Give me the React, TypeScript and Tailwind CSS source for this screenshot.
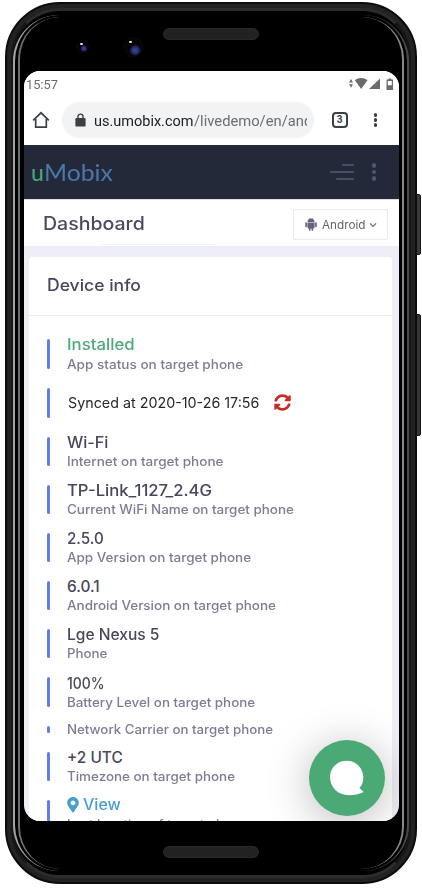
import { useLayoutEffect, useRef, useState, type ReactNode } from "react";
import { FaMapMarkerAlt, FaSyncAlt } from "react-icons/fa";

type FitProps = { text: string; width: number; className?: string };

/** Single line label whose glyphs are stretched to fill the given width. */
function Fit({ text, width, className = "" }: FitProps) {
  const ref = useRef<HTMLSpanElement>(null);
  const [scale, setScale] = useState(1);
  useLayoutEffect(() => {
    if (ref.current) setScale(width / ref.current.offsetWidth);
  }, [text, width]);
  return (
    <span className={`block shrink-0 whitespace-nowrap ${className}`} style={{ width }}>
      <span ref={ref} className="inline-block origin-left align-top" style={{ transform: `scaleX(${scale})` }}>
        {text}
      </span>
    </span>
  );
}

function Row({ children, className = "h-[29.2px]" }: { children: ReactNode; className?: string }) {
  return (
    <div className={`flex shrink-0 ${className}`}>
      <div className="mr-[17.5px] w-[2.5px] shrink-0 rounded-full bg-[#5f7fe8]" />
      <div className="flex flex-col items-start justify-center">{children}</div>
    </div>
  );
}

const VALUE = "text-[15.4px] leading-[20px] pt-px -mb-px font-[480] text-[#48465b]";
const LABEL = "text-[12.8px] leading-[19px] font-[450] text-[#7d7c97]";

const rows = [
  { value: "Wi-Fi", vw: 41, label: "Internet on target phone", lw: 156.5 },
  { value: "TP-Link_1127_2.4G", vw: 145, label: "Current WiFi Name on target phone", lw: 226.5 },
  { value: "2.5.0", vw: 36.5, label: "App Version on target phone", lw: 184 },
  { value: "6.0.1", vw: 33, label: "Android Version on target phone", lw: 208.5 },
  { value: "Lge Nexus 5", vw: 92, label: "Phone", lw: 40.5 },
  { value: "100%", vw: 38, label: "Battery Level on target phone", lw: 188 },
];

function StatusBar() {
  return (
    <div className="flex h-[26px] items-center justify-between pr-[4px] pl-[2px] text-[#6b6b6b]">
      <Fit text="15:57" width={32} className="pt-px font-[Roboto,sans-serif] text-[13.2px] leading-[16px]" />
      <svg width="46" height="14" viewBox="0 0 46 14" fill="currentColor" className="-mt-px">
        <path d="M0 5.4 2 2l2 3.4ZM0 7.3h4L2 10.8Z" />
        <path d="M5.800 3.200c3.700-2.900 9-2.900 12.700 0L12.200 12Z" />
        <path d="M20 12 31 1.400V12Z" />
        <path fillRule="evenodd" d="M39.400 1.400h3v1.200h1.600V13h-6.500V2.600h1.900Zm-.6 2.700v4.100h4V4.100Z" />
      </svg>
    </div>
  );
}

function AddressBar() {
  return (
    <div className="flex h-[46px] items-center pl-[8px] text-[#3c4043]">
      <svg width="18" height="18" viewBox="0 0 18 18" fill="none" stroke="currentColor" strokeWidth="1.7">
        <path d="M1.2 9.4 9 1.8l7.8 7.6M3.7 8v8.2h10.6V8" />
      </svg>
      <div className="ml-[12px] flex h-[36px] w-[252px] items-center rounded-full bg-[#f1f3f4]">
        <svg width="11" height="14" viewBox="0 0 11 14" className="ml-[12.5px]">
          <path d="M3 6V3.6a2.5 2.5 0 0 1 5 0V6" fill="none" stroke="#3c4043" strokeWidth="1.4" />
          <rect x="0.4" y="5" width="10.2" height="8.6" rx="1.2" fill="#3c4043" />
        </svg>
        <div className="ml-[8.5px] flex w-[213px] overflow-hidden pt-px font-[Roboto,sans-serif] text-[15px] leading-[20px]">
          <Fit text="us.umobix.com" width={99.5} className="text-[#202124]" />
          <Fit text="/livedemo/en/and" width={118} className="text-[#6b6e72]" />
        </div>
      </div>
      <div className="ml-[17.5px] flex h-[16px] w-[16px] items-center justify-center rounded-[4px] border-2 border-[#3c4043] font-[Roboto,sans-serif] text-[10px] leading-none font-bold">
        3
      </div>
      <div className="ml-[26px] flex flex-col gap-[1.6px]">
        <i className="size-[3.7px] rounded-full bg-[#3c4043]" />
        <i className="size-[3.7px] rounded-full bg-[#3c4043]" />
        <i className="size-[3.7px] rounded-full bg-[#3c4043]" />
      </div>
    </div>
  );
}

function SiteHeader() {
  return (
    <div className="flex h-[54px] shrink-0 items-center bg-[#242939]">
      <div className="ml-[7px] flex w-[299px] font-[Lato,sans-serif] text-[23px] leading-[24px]">
        <Fit text="u" width={13} className="text-[#4bab74]" />
        <Fit text="Mobix" width={69} className="text-[#4a78a8]" />
      </div>
      <div className="flex w-[24px] flex-col items-end gap-[5px]">
        <i className="h-[2px] w-[12px] rounded-full bg-[#484e66]" />
        <i className="h-[2px] w-[24px] rounded-full bg-[#484e66]" />
        <i className="h-[2px] w-[18px] rounded-full bg-[#484e66]" />
      </div>
      <div className="ml-[18px] flex flex-col gap-[2px]">
        <i className="size-[4.4px] rounded-full bg-[#50566f]" />
        <i className="size-[4.4px] rounded-full bg-[#50566f]" />
        <i className="size-[4.4px] rounded-full bg-[#50566f]" />
      </div>
    </div>
  );
}

function AndroidIcon() {
  return (
    <svg width="12" height="13" viewBox="0 0 12 13" fill="currentColor">
      <path d="M2.500 4C2.500 2.400 3.300 1.500 4.300 1L3.700.2l.4-.2.6.8c.8-.3 1.800-.3 2.600 0l.6-.8.4.2L7.700 1c1 .5 1.800 1.400 1.800 3Z" />
      <rect x="0.200" y="4.200" width="1.700" height="5" rx=".85" />
      <rect x="10.100" y="4.200" width="1.700" height="5" rx=".85" />
      <path d="M2.400 4.400h7.200v5.200c0 .5-.4.800-.8.800h-.7v1.700c0 1.100-1.600 1.100-1.600 0v-1.700h-1v1.700c0 1.100-1.600 1.100-1.600 0v-1.700h-.7c-.4 0-.8-.3-.8-.8Z" />
    </svg>
  );
}

function Dashboard() {
  return (
    <div className="flex h-[46px] shrink-0 flex-col bg-white">
      <div className="flex h-[44px] items-center justify-between pt-[5px] pr-[11px] pl-[19px]">
        <Fit text="Dashboard" width={102} className="-mt-px text-[18px] leading-[24px] font-[480] text-[#4d4a5f]" />
        <div className="flex h-[31px] w-[95px] items-center rounded-[2px] border border-[#e8eaf2] pl-[11px] text-[#65637c]">
          <AndroidIcon />
          <Fit text="Android" width={43} className="ml-[5px] text-[11.2px] leading-[16px]" />
          <svg width="8" height="6" viewBox="0 0 8 6" fill="none" stroke="currentColor" strokeWidth="1.2" className="ml-[3.5px]">
            <path d="m1 1.3 3 3 3-3" />
          </svg>
        </div>
      </div>
      <div className="ml-[76px] h-[1px] w-[116px] bg-[#f2f8f2]" />
    </div>
  );
}

function DeviceCard() {
  return (
    <div className="mt-[11px] ml-[5px] h-[600px] w-[363px] shrink-0 rounded-t-[4px] bg-white">
      <div className="flex h-[59px] items-center border-b-[1.5px] border-[#eceef4] pl-[18px]">
        <Fit text="Device info" width={94} className="-mt-[2px] text-[16.6px] leading-[24px] font-[480] text-[#48465b]" />
      </div>
      <div className="flex flex-col gap-[19px] pt-[23px] pl-[18px]">
        <Row className="h-[30px]">
          <Fit text="Installed" width={67.5} className="text-[15.4px] leading-[20px] font-[480] text-[#4dab76]" />
          <Fit text="App status on target phone" width={176} className={LABEL} />
        </Row>
        <Row className="-mt-[0.5px] h-[30px]">
          <div className="flex items-center pl-px">
            <Fit text="Synced at 2020-10-26 17:56" width={191.5} className="text-[14.2px] leading-[20px] text-[#26262c]" />
            <FaSyncAlt className="ml-[14px] size-[17px] text-[#c72d20]" />
          </div>
        </Row>
        {rows.map((r) => (
          <Row key={r.label}>
            <Fit text={r.value} width={r.vw} className={VALUE} />
            <Fit text={r.label} width={r.lw} className={LABEL} />
          </Row>
        ))}
        <Row className="h-[7px]">
          <Fit text="Network Carrier on target phone" width={206.5} className={LABEL} />
        </Row>
        <Row>
          <Fit text="+2 UTC" width={56} className={VALUE} />
          <Fit text="Timezone on target phone" width={168.5} className={LABEL} />
        </Row>
        <Row>
          <div className="flex items-center text-[#459fcf]">
            <FaMapMarkerAlt className="h-[15.5px] w-[12px]" />
            <Fit text="View" width={37.5} className="ml-[4px] pt-px text-[15.4px] leading-[20px] font-[480]" />
          </div>
          <Fit text="Last location of target phone" width={180} className={LABEL} />
        </Row>
      </div>
    </div>
  );
}

function Grille({ className }: { className: string }) {
  return <div className={`mx-auto h-[12px] w-[96px] rounded-full border border-[#292929] bg-[#222222] ${className}`} />;
}

function Lens({ className }: { className: string }) {
  return (
    <div className={`absolute rounded-full border border-[#0b0b0f] bg-[radial-gradient(circle_at_62%_68%,#34469a_0%,#26367c_18%,#050508_36%)] ${className}`}>
      <i className="absolute top-[16%] left-[28%] size-[2.5px] rounded-full bg-[#e5e5e5] blur-[0.5px]" />
    </div>
  );
}

export default function App() {
  return (
    <div className="relative h-[888px] w-[422px] overflow-hidden bg-white font-[Inter,'Open_Sans',sans-serif]">
      <div className="absolute top-[194px] left-[414px] h-[61px] w-[7px] rounded-[2px] border border-[#1a1a1a] bg-[#3a3a3a]" />
      <div className="absolute top-[314px] left-[414px] h-[122px] w-[7px] rounded-[2px] border border-[#1a1a1a] bg-[#343434]" />
      <div className="relative mt-[2px] ml-[5px] inline-block h-[882px] w-[412px] rounded-[55px] border-[2px] border-[#0c0c0c] bg-[#222222] p-[4px]">
        <div className="h-full rounded-[49px] border-[3px] border-x-[#161616] border-y-[#2c2c2c] bg-[#161616]">
          <div className="h-full rounded-[46px] bg-black">
            <div className="pointer-events-none absolute inset-x-[6px] inset-y-[11px] rounded-[46px] border-r-[2px] border-l-[2px] border-r-[#4a4a4a] border-l-[#a3a3a3]" />
            <div className="pointer-events-none absolute inset-x-[11px] inset-y-[13px] rounded-[42px] border-r-[2.5px] border-l-[2px] border-r-[#888888] border-l-[#6e6e6e]" />
            <Grille className="relative top-[17px]" />
            <Grille className="relative top-[823px]" />
          </div>
        </div>
      </div>
      <Lens className="top-[40px] left-[76px] size-[13px]" />
      <Lens className="top-[37px] left-[123px] size-[20px]" />
      <div className="absolute top-[71px] left-[24px] flex h-[750px] w-[375px] flex-col overflow-hidden rounded-[16px] bg-[#eeeff6]">
        <div className="h-[74px] shrink-0 bg-white">
          <StatusBar />
          <AddressBar />
        </div>
        <SiteHeader />
        <div className="h-px shrink-0 bg-[#dddfe5]" />
        <Dashboard />
        <DeviceCard />
        <div className="absolute top-[669px] left-[285px] flex size-[76px] items-center justify-center rounded-full bg-[#4ba975] shadow-[0_6px_44px_rgba(0,0,0,0.28)]">
          <svg width="36" height="36" viewBox="0 0 36 36" fill="#fff">
            <path d="M17.500.8C8.200.8 1 8 1 17c0 10.200 8 18.200 19 18.200 5 0 9.500-.8 14.700-3.200l-4.200-4c2.600-3 3.800-6.300 3.800-10.300C34.300 8 27 .8 17.500.8Z" />
          </svg>
        </div>
      </div>
    </div>
  );
}
